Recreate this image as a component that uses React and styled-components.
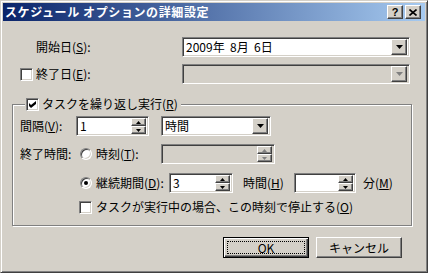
import React from 'react';
import styled, { createGlobalStyle, css } from 'styled-components';

const GlobalStyle = createGlobalStyle`
  html, body {
    margin: 0;
    padding: 0;
    background: #d4d0c8;
  }
  body {
    font-family: "Noto Sans CJK JP", "Noto Sans", sans-serif;
    font-size: 12px;
    color: #000;
  }
`;

const raised = css`
  border: 1px solid;
  border-color: #fff #404040 #404040 #fff;
  box-shadow: inset -1px -1px #808080, inset 1px 1px #d4d0c8;
`;

const sunken = css`
  border: 1px solid;
  border-color: #808080 #fff #fff #808080;
  box-shadow: inset 1px 1px #404040, inset -1px -1px #d4d0c8;
`;

const Window = styled.div`
  width: 428px;
  height: 273px;
  box-sizing: border-box;
  background: #d4d0c8;
  border: 1px solid;
  border-color: #d4d0c8 #404040 #404040 #d4d0c8;
  box-shadow: inset 1px 1px #fff, inset -1px -1px #808080;
  padding: 2px;
  display: flex;
  flex-direction: column;
`;

const TitleBar = styled.div`
  height: 18px;
  flex: none;
  display: flex;
  align-items: center;
  padding: 0 4px 0 2px;
  background: linear-gradient(to right, #0a246a, #a6caf0);
  color: #fff;
  font-weight: bold;
  font-size: 12px;
`;

const Title = styled.div`
  flex: 1;
  line-height: 14px;
  letter-spacing: 0.6px;
  white-space: nowrap;
`;

const CaptionButton = styled.div`
  width: 16px;
  height: 14px;
  box-sizing: border-box;
  background: #d4d0c8;
  ${raised};
  margin-left: ${p => p.$gap || 0}px;
  display: flex;
  align-items: center;
  justify-content: center;
  color: #000;
  font-family: "Liberation Sans", sans-serif;
  font-weight: bold;
  font-size: 11px;
  line-height: 10px;
`;

const Body = styled.div`
  flex: 1;
  display: flex;
  flex-direction: column;
  padding: 16px 13px 0 9px;
`;

const FieldRow = styled.div`
  display: grid;
  grid-template-columns: 162px 1fr;
  align-items: center;
  height: 20px;
  margin: ${p => p.$top || 0}px 2px 0 8px;
`;

const LabelCell = styled.div`
  display: flex;
  align-items: center;
  gap: 3px;
  padding-left: ${p => p.$indent || 0}px;
`;

const Text = styled.span`
  line-height: 14px;
  white-space: nowrap;
  width: ${p => (p.$w ? `${p.$w}px` : 'auto')};
  margin-left: ${p => p.$ml || 0}px;
  flex: none;
`;

const U = styled.span`
  text-decoration: underline;
  text-underline-offset: 1px;
`;

const Combo = styled.div`
  box-sizing: border-box;
  height: 20px;
  width: ${p => (p.$w ? `${p.$w}px` : 'auto')};
  ${sunken};
  background: ${p => (p.$disabled ? '#d4d0c8' : '#fff')};
  display: flex;
  align-items: center;
  padding: 2px;
  flex: none;
`;

const FieldText = styled.span`
  flex: 1;
  padding-left: 1px;
  line-height: 16px;
  white-space: pre;
  overflow: hidden;
`;

const DropButton = styled.div`
  width: 16px;
  height: 16px;
  box-sizing: border-box;
  background: #d4d0c8;
  ${raised};
  display: flex;
  align-items: center;
  justify-content: center;
`;

const Spin = styled.div`
  width: 15px;
  height: 16px;
  display: flex;
  flex-direction: column;
`;

const SpinButton = styled.div`
  height: 8px;
  box-sizing: border-box;
  background: #d4d0c8;
  ${raised};
  display: flex;
  align-items: center;
  justify-content: center;
`;

const Check = styled.span`
  width: 13px;
  height: 13px;
  box-sizing: border-box;
  ${sunken};
  background: #fff;
  display: inline-flex;
  align-items: center;
  justify-content: center;
  flex: none;
  margin-left: ${p => p.$ml || 0}px;
`;

const Radio = styled.span`
  width: 12px;
  height: 12px;
  box-sizing: border-box;
  border-radius: 50%;
  border: 1px solid;
  border-color: #808080 #fff #fff #808080;
  box-shadow: inset 1px 1px #404040, inset -1px -1px #d4d0c8;
  background: #fff;
  display: inline-flex;
  align-items: center;
  justify-content: center;
  flex: none;
  margin-left: ${p => p.$ml || 0}px;

  &::after {
    content: '';
    width: 4px;
    height: 4px;
    border-radius: 50%;
    background: #000;
    display: ${p => (p.$checked ? 'block' : 'none')};
  }
`;

const Group = styled.div`
  margin-top: 20px;
  border: 1px solid #808080;
  box-shadow: inset 1px 1px #fff, 1px 1px #fff;
  padding: 0 0 11px 7px;
  display: flex;
  flex-direction: column;
`;

const GroupCaption = styled.div`
  align-self: flex-start;
  display: flex;
  align-items: center;
  gap: 3px;
  height: 14px;
  margin: -8px 0 0 5px;
  padding: 0 3px 0 1px;
  background: #d4d0c8;
`;

const Row = styled.div`
  display: flex;
  align-items: center;
  height: ${p => p.$h || 20}px;
  margin-top: ${p => p.$top || 0}px;
`;

const ButtonRow = styled.div`
  display: flex;
  justify-content: flex-end;
  gap: 7px;
  margin: 11px 10px 0 0;
`;

const PushButton = styled.div`
  width: 86px;
  height: 21px;
  box-sizing: border-box;
  background: #d4d0c8;
  border: 1px solid;
  display: flex;
  align-items: stretch;
  justify-content: center;
  padding: 3px;
  ${p =>
    p.$default
      ? css`
          border-color: #000;
          box-shadow: inset 1px 1px #fff, inset -1px -1px #404040, inset -2px -2px #808080;
        `
      : css`
          border-color: #fff #404040 #404040 #fff;
          box-shadow: inset -1px -1px #808080, inset 1px 1px #d4d0c8;
        `}
`;

const ButtonFace = styled.span`
  flex: 1;
  display: flex;
  align-items: center;
  justify-content: center;
  line-height: 13px;
  border: 1px dotted ${p => (p.$focus ? '#000' : 'transparent')};
`;

const Arrow = ({ up, small, color = '#000' }) =>
  small ? (
    <svg width="5" height="3" viewBox="0 0 5 3">
      <polygon points={up ? '0,3 5,3 2.5,0' : '0,0 5,0 2.5,3'} fill={color} />
    </svg>
  ) : (
    <svg width="7" height="4" viewBox="0 0 7 4">
      <polygon points="0,0 7,0 3.5,4" fill={color} />
    </svg>
  );

const CheckMark = () => (
  <svg width="7" height="7" viewBox="0 0 7 7">
    <polygon points="0,2 2,4 7,0 7,3 2,7 0,5" fill="#000" />
  </svg>
);

const CloseGlyph = () => (
  <svg width="8" height="7" viewBox="0 0 8 7">
    <path d="M0.5 0.5 L7.5 6.5 M7.5 0.5 L0.5 6.5" stroke="#000" strokeWidth="1.6" />
  </svg>
);

const SpinEdit = ({ w, value, disabled }) => (
  <Combo $w={w} $disabled={disabled}>
    <FieldText>{value}</FieldText>
    <Spin>
      <SpinButton><Arrow up small color={disabled ? '#808080' : '#000'} /></SpinButton>
      <SpinButton><Arrow small color={disabled ? '#808080' : '#000'} /></SpinButton>
    </Spin>
  </Combo>
);

const DropCombo = ({ w, value, disabled }) => (
  <Combo $w={w} $disabled={disabled}>
    <FieldText>{value}</FieldText>
    <DropButton><Arrow color={disabled ? '#808080' : '#000'} /></DropButton>
  </Combo>
);

export default function App() {
  return (
    <>
      <GlobalStyle />
      <Window>
        <TitleBar>
          <Title>スケジュール オプションの詳細設定</Title>
          <CaptionButton>?</CaptionButton>
          <CaptionButton $gap={2}><CloseGlyph /></CaptionButton>
        </TitleBar>
        <Body>
          <FieldRow>
            <LabelCell $indent={16}>
              <Text>開始日(<U>S</U>):</Text>
            </LabelCell>
            <DropCombo value={'2009年  8月  6日'} />
          </FieldRow>
          <FieldRow $top={7}>
            <LabelCell>
              <Check />
              <Text>終了日(<U>E</U>):</Text>
            </LabelCell>
            <DropCombo disabled />
          </FieldRow>

          <Group>
            <GroupCaption>
              <Check><CheckMark /></Check>
              <Text>タスクを繰り返し実行(<U>R</U>)</Text>
            </GroupCaption>

            <Row $top={5}>
              <Text $w={56}>間隔(<U>V</U>):</Text>
              <SpinEdit w={73} value="1" />
              <Text $w={12} />
              <DropCombo w={110} value="時間" />
            </Row>

            <Row $top={8}>
              <Text $w={60}>終了時間:</Text>
              <Radio />
              <Text $w={65} $ml={4}>時刻(<U>T</U>):</Text>
              <SpinEdit w={114} disabled />
            </Row>

            <Row $top={9}>
              <Radio $ml={60} $checked />
              <Text $w={73} $ml={4}>継続期間(<U>D</U>):</Text>
              <SpinEdit w={64} value="3" />
              <Text $w={51} $ml={10}>時間(<U>H</U>)</Text>
              <SpinEdit w={62} />
              <Text $ml={7}>分(<U>M</U>)</Text>
            </Row>

            <Row $top={7} $h={14}>
              <Check $ml={59} />
              <Text $ml={4}>タスクが実行中の場合、この時刻で停止する(<U>O</U>)</Text>
            </Row>
          </Group>

          <ButtonRow>
            <PushButton $default>
              <ButtonFace $focus>OK</ButtonFace>
            </PushButton>
            <PushButton>
              <ButtonFace>キャンセル</ButtonFace>
            </PushButton>
          </ButtonRow>
        </Body>
      </Window>
    </>
  );
}
